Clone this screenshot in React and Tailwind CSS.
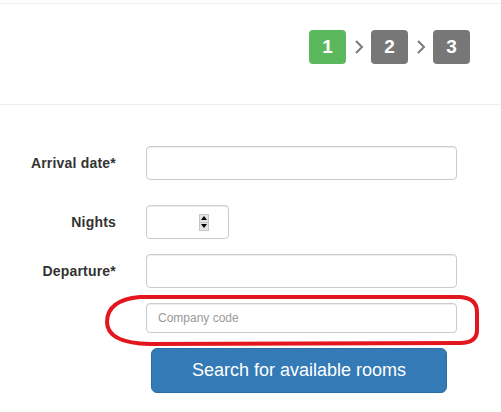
import React from "react";

function Chevron() {
  return (
    <svg width="10" height="16" viewBox="0 0 10 16" className="block">
      <polyline points="2,2 8,8 2,14" fill="none" stroke="#7a7a7a" strokeWidth="2" />
    </svg>
  );
}

function Badge({ n, green }) {
  return (
    <div
      className={`w-[37px] h-[34px] rounded-[4px] flex items-center justify-center text-white font-bold text-[19px] ${green ? "bg-[#5cb85c]" : "bg-[#777777]"}`}
    >
      {n}
    </div>
  );
}

function Field({ label, children, h = "h-[34px]" }) {
  return (
    <div className={`flex items-center ${h}`}>
      <div className="w-[116px] text-right font-bold text-[14px] text-[#333] tracking-[0.2px]">{label}</div>
      <div className="ml-[30px]">{children}</div>
    </div>
  );
}

const inputCls =
  "border border-[#cccccc] rounded-[4px] bg-white shadow-[inset_0_1px_1px_rgba(0,0,0,0.075)]";

export default function App() {
  return (
    <div className="relative w-[501px] h-[412px] bg-white overflow-hidden" style={{ fontFamily: '"Liberation Sans", Arial, sans-serif' }}>
      <div className="h-[3px]" />
      <div className="border-t border-b border-[#eeeeee] h-[102px] flex justify-end items-start pt-[26px] pr-[31px]">
        <div className="flex items-center">
          <Badge n="1" green />
          <div className="w-[25px] flex justify-center"><Chevron /></div>
          <Badge n="2" />
          <div className="w-[25px] flex justify-center"><Chevron /></div>
          <Badge n="3" />
        </div>
      </div>
      <div className="pt-[41px] flex flex-col">
        <Field label="Arrival date*">
          <div className={`${inputCls} w-[311px] h-[34px]`} />
        </Field>
        <div className="h-[25px]" />
        <Field label="Nights">
          <div className={`${inputCls} w-[83px] h-[34px] flex items-center justify-end pr-[19px]`}>
            <div className="w-[10px] h-[17px] flex flex-col border border-[#c6c6c6] bg-[#e4e4e4]">
              <div className="flex-1 flex items-center justify-center border-b border-[#c6c6c6]">
                <div className="w-0 h-0 border-l-[3px] border-r-[3px] border-b-[4px] border-l-transparent border-r-transparent border-b-black" />
              </div>
              <div className="flex-1 flex items-center justify-center">
                <div className="w-0 h-0 border-l-[3px] border-r-[3px] border-t-[4px] border-l-transparent border-r-transparent border-t-black" />
              </div>
            </div>
          </div>
        </Field>
        <div className="h-[15px]" />
        <Field label="Departure*">
          <div className={`${inputCls} w-[311px] h-[34px]`} />
        </Field>
        <div className="h-[15px]" />
        <Field label="" h="h-[30px]">
          <div className={`${inputCls} w-[311px] h-[30px] flex items-center pl-[11px] text-[12px] text-[#999999]`}>
            Company code
          </div>
        </Field>
        <div className="h-[15px]" />
        <div className="pl-[151px]">
          <div className="w-[296px] h-[45px] rounded-[6px] bg-[#337ab7] border border-[#2e6da4] flex items-center justify-center text-white text-[18px]">
            Search for available rooms
          </div>
        </div>
      </div>
      <svg className="absolute left-0 top-0 pointer-events-none" width="501" height="412" viewBox="0 0 501 412">
        <path
          d="M 140 297 L 460 297 Q 477 298 477 312 L 477 330 Q 477 343 460 343 L 150 344 Q 107 343 107 322 Q 107 300 140 297 Z"
          fill="none"
          stroke="#e3161e"
          strokeWidth="4"
        />
      </svg>
    </div>
  );
}
